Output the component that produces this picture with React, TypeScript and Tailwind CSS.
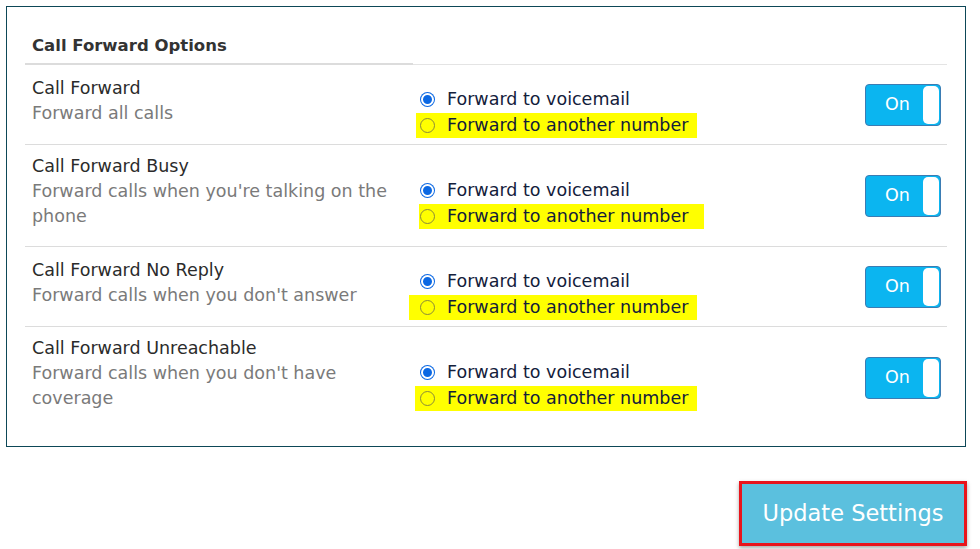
type Option = {
  title: string;
  lines: string[];
  hl: string;
};

const options: Option[] = [
  {
    title: "Call Forward",
    lines: ["Forward all calls"],
    hl: "ml-[3px] w-[281px] pl-[4px]",
  },
  {
    title: "Call Forward Busy",
    lines: ["Forward calls when you're talking on the", "phone"],
    hl: "ml-[6px] w-[285px] pl-[1px]",
  },
  {
    title: "Call Forward No Reply",
    lines: ["Forward calls when you don't answer"],
    hl: "ml-[-4px] w-[288px] pl-[11px]",
  },
  {
    title: "Call Forward Unreachable",
    lines: ["Forward calls when you don't have", "coverage"],
    hl: "ml-[2px] w-[282px] pl-[5px]",
  },
];

function Radio({ checked }: { checked: boolean }) {
  return checked ? (
    <span className="flex h-[15px] w-[15px] shrink-0 items-center justify-center rounded-full bg-[#0b68e3]">
      <span className="h-[13px] w-[13px] rounded-full border-2 border-white bg-[#0b68e3]" />
    </span>
  ) : (
    <span className="block h-[15px] w-[15px] shrink-0 rounded-full border border-[#8a8a3a]" />
  );
}

function Toggle() {
  return (
    <div className="flex h-[42px] w-[76px] overflow-hidden rounded-[4px] border border-[#3b7cb3] bg-[#0bb5f0]">
      <span className="flex flex-1 items-center justify-center pl-[6px] text-[17.5px] text-white">
        On
      </span>
      <span className="my-[1px] mr-[1px] w-[16px] rounded-[5px] bg-white" />
    </div>
  );
}

export default function App() {
  return (
    <div className="min-h-[549px] bg-white pt-[6px] pl-[6px] font-['DejaVu_Sans',sans-serif]">
      <div className="w-[960px] border border-[#0d4757] px-[18px] pt-[26px] pb-[18px]">
        <div className="flex">
          <div className="w-[388px] border-b-2 border-[#dcdcdc] px-[7px] pb-[5px] text-[16.5px] leading-[25px] font-bold text-[#333]">
            Call Forward Options
          </div>
          <div className="flex-1 border-b border-[#e4e4e4]" />
        </div>
        {options.map((o, i) => (
          <div
            key={i}
            className={
              "flex items-center py-[6px] " +
              (i > 0 ? "border-t border-[#dcdcdc]" : "")
            }
          >
            <div className="mb-[11px] w-[388px] px-[7px] pt-[3px] text-[17.5px] leading-[25px]">
              <p className="text-[#2b2b2b]">{o.title}</p>
              {o.lines.map((l, j) => (
                <p key={j} className="text-[#7a7a7a]">
                  {l}
                </p>
              ))}
            </div>
            <div className="mt-[15px] flex-1 text-[17.5px] leading-[27px] text-[#13203b]">
              <div className="flex items-center gap-[12px] pl-[7px]">
                <Radio checked />
                <span>Forward to voicemail</span>
              </div>
              <div
                className={
                  "flex h-[25px] items-center gap-[12px] bg-[#ffff00] " + o.hl
                }
              >
                <Radio checked={false} />
                <span>Forward to another number</span>
              </div>
            </div>
            <div className="pr-[6px]">
              <Toggle />
            </div>
          </div>
        ))}
      </div>
      <div className="mt-[34px] flex w-[961px] justify-end">
        <button className="h-[65px] w-[228px] border-[3px] border-[#e8141c] bg-[#5bc0de] text-[22.5px] text-white shadow-[0_2px_4px_rgba(0,0,0,0.35)]">
          Update Settings
        </button>
      </div>
    </div>
  );
}
